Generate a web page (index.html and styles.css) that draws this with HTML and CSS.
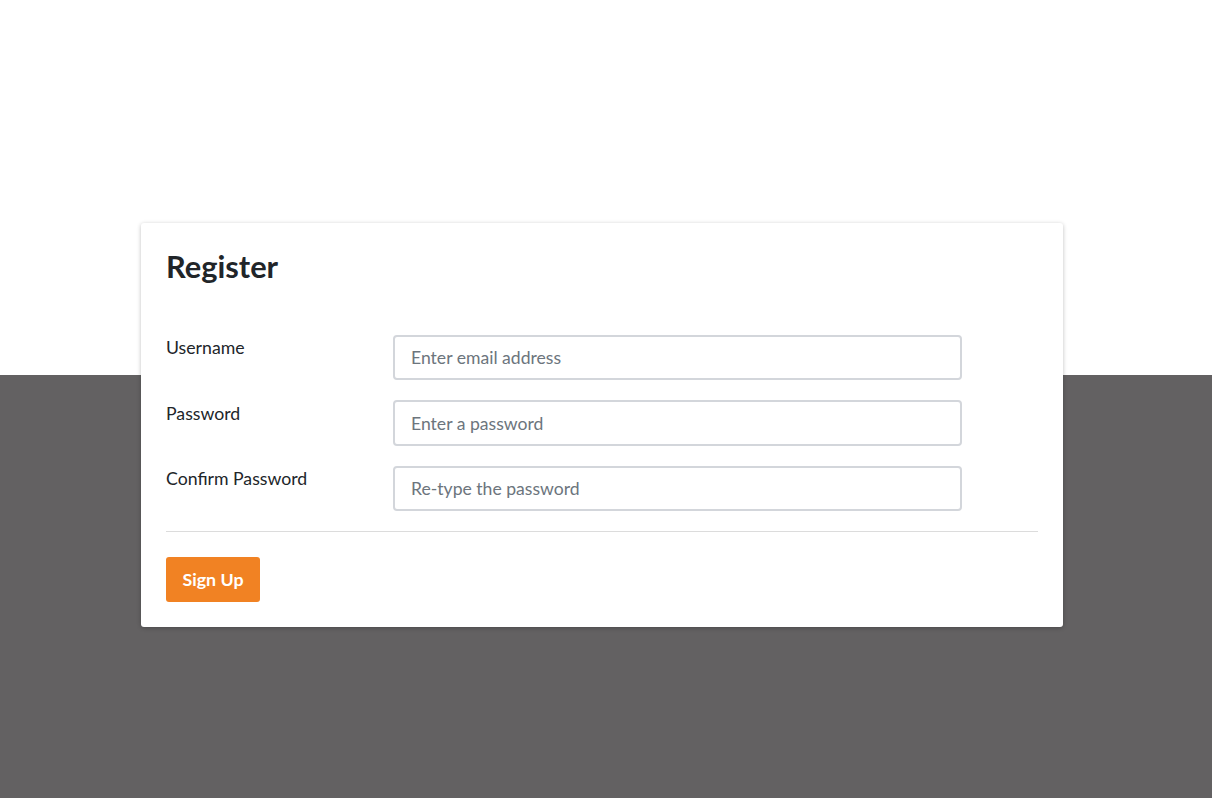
FILE: index.html
```
<!DOCTYPE html>
<html lang="en">
<head>
  <meta charset="UTF-8">
  <meta name="viewport" content="width=device-width, initial-scale=1.0">
  <title>Register</title>
  <link rel="stylesheet" href="styles.css">
</head>
<body>
  <div class="card">
    <h1>Register</h1>

    <form class="register-form">
      <div class="form-row">
        <label for="username">Username</label>
        <input type="text" id="username" placeholder="Enter email address">
      </div>
      <div class="form-row">
        <label for="password">Password</label>
        <input type="password" id="password" placeholder="Enter a password">
      </div>
      <div class="form-row">
        <label for="confirm">Confirm Password</label>
        <input type="password" id="confirm" placeholder="Re-type the password">
      </div>

      <hr>

      <button type="submit">Sign Up</button>
    </form>
  </div>
</body>
</html>
```

FILE: styles.css
```
html, body {
  height: 100%;
}
body {
  margin: 0;
  font-family: Lato, "Open Sans", sans-serif;
  color: #212529;
  background: linear-gradient(#fff 375px, #636162 375px);
  overflow: hidden;
}
.card {
  box-sizing: border-box;
  width: 922px;
  margin: 223px 0 0 141px;
  padding: 25px;
  background: #fff;
  border-radius: 3px;
  box-shadow: 0 1px 4px rgba(0, 0, 0, 0.25);
}
h1 {
  margin: 1px 0 50.5px;
  font-size: 30.8px;
  font-weight: 700;
  line-height: 1.15;
}
.form-row {
  display: flex;
  align-items: flex-start;
  margin-bottom: 20px;
}
.form-row:last-of-type {
  margin-bottom: 19.5px;
}
label {
  width: 227px;
  flex-shrink: 0;
  font-size: 17.7px;
  line-height: 1.5;
  padding-top: 0.5px;
}
input {
  box-sizing: border-box;
  width: 569px;
  height: 45.5px;
  padding: 0 16px;
  border: 2px solid #d3d6db;
  border-radius: 4px;
  font-family: inherit;
  font-size: 17.6px;
  color: #495057;
  outline: none;
}
input::placeholder {
  color: #6c757d;
}
hr {
  margin: 0 0 25px;
  border: none;
  border-top: 1px solid #dcdcdc;
}
button {
  height: 45px;
  padding: 0 16.5px;
  background: #f18223;
  color: #fff;
  border: none;
  border-radius: 3px;
  font-family: inherit;
  font-size: 17.8px;
  font-weight: 700;
  cursor: pointer;
}
button:hover {
  background: #e07214;
}
```
